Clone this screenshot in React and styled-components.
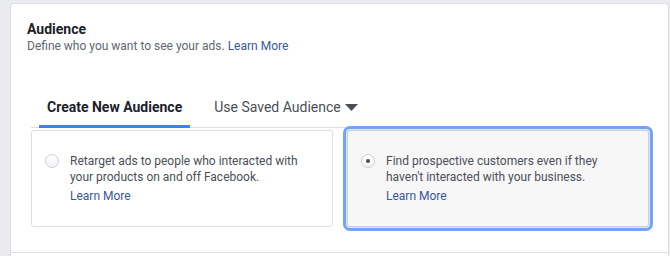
import React, { useState } from "react";
import styled, { createGlobalStyle } from "styled-components";

const GlobalStyle = createGlobalStyle`
  * { box-sizing: border-box; }
  body {
    margin: 0;
    background-color: #e9ebee;
    font-family: Roboto, "Liberation Sans", Arial, sans-serif;
    -webkit-font-smoothing: antialiased;
  }
`;

const Page = styled.div`
  padding: 3px 1px 0 10px;
  height: 256px;
  overflow: hidden;
`;

const Card = styled.div`
  background-color: #fff;
  border: 1px solid #dddfe2;
  border-bottom: none;
  border-radius: 4px 4px 0 0;
  height: 260px;
`;

const Section = styled.div`
  padding: 17px 19px 25px 16px;
  border-bottom: 1px solid #dddfe2;
`;

const Title = styled.h2`
  margin: 0;
  font-size: 14px;
  line-height: 17px;
  font-weight: 700;
  color: #1d2129;
`;

const Subtitle = styled.p`
  margin: 0;
  font-size: 12px;
  line-height: 16px;
  color: #606770;
`;

const Link = styled.a`
  color: #385898;
  text-decoration: none;
  cursor: pointer;
  display: ${(p) => (p.$block ? "block" : "inline")};
  margin-top: ${(p) => (p.$block ? "3px" : "0")};
`;

const Body = styled.div`
  margin: 44px 0 0 4px;
`;

const TabList = styled.div`
  display: flex;
  align-items: flex-end;
  gap: 16px;
  border-bottom: 1px solid #dddfe2;
  padding-left: 8px;
`;

const Tab = styled.button`
  display: flex;
  align-items: center;
  gap: 4px;
  background: none;
  border: none;
  border-bottom: 3px solid ${(p) => (p.$active ? "#4080ff" : "transparent")};
  margin-bottom: -1px;
  padding: 0 8px 9px;
  font-family: inherit;
  font-size: 14px;
  line-height: 18px;
  font-weight: ${(p) => (p.$active ? 700 : 400)};
  color: ${(p) => (p.$active ? "#1d2129" : "#4b4f56")};
  cursor: pointer;
`;

const Options = styled.div`
  display: grid;
  grid-template-columns: 302px 302px;
  gap: 14px;
  margin-top: 2px;
`;

const Option = styled.label`
  display: flex;
  align-items: flex-start;
  gap: 11px;
  padding: 22px 14px 22px 13px;
  border: 1px solid ${(p) => (p.$selected ? "#c8d0dc" : "#dddfe2")};
  border-radius: 3px;
  background-color: ${(p) => (p.$selected ? "#f7f7f8" : "#fff")};
  box-shadow: ${(p) =>
    p.$selected ? "0 0 0 1px #dbe7fb, 0 0 0 4px #72a3f6" : "none"};
  cursor: pointer;
`;

const Radio = styled.span`
  flex: none;
  position: relative;
  width: 14px;
  height: 14px;
  margin-top: 1px;
  border-radius: 50%;
  border: 1px solid #ccd0d5;
  background: linear-gradient(#fff, #f1f2f4);
  &::after {
    content: "";
    display: ${(p) => (p.$checked ? "block" : "none")};
    position: absolute;
    top: 4px;
    left: 4px;
    width: 4px;
    height: 4px;
    border-radius: 50%;
    background-color: #4b4f56;
  }
`;

const OptionText = styled.div`
  font-size: 12px;
  line-height: 16px;
  color: #4b4f56;
`;

const Caret = () => (
  <svg width="13" height="7" viewBox="0 0 13 7">
    <path d="M0 0h13L6.5 7z" fill="#4b4f56" />
  </svg>
);

const options = [
  {
    id: "retarget",
    text: "Retarget ads to people who interacted with your products on and off Facebook.",
  },
  {
    id: "prospect",
    text: "Find prospective customers even if they haven't interacted with your business.",
  },
];

export default function App() {
  const [selected, setSelected] = useState("prospect");

  return (
    <Page>
      <GlobalStyle />
      <Card>
        <Section>
          <Title>Audience</Title>
          <Subtitle>
            Define who you want to see your ads. <Link>Learn More</Link>
          </Subtitle>
          <Body>
            <TabList>
              <Tab $active>Create New Audience</Tab>
              <Tab>
                Use Saved Audience <Caret />
              </Tab>
            </TabList>
            <Options>
              {options.map((o) => (
                <Option
                  key={o.id}
                  $selected={selected === o.id}
                  onClick={() => setSelected(o.id)}
                >
                  <Radio $checked={selected === o.id} />
                  <OptionText>
                    {o.text}
                    <Link $block>Learn More</Link>
                  </OptionText>
                </Option>
              ))}
            </Options>
          </Body>
        </Section>
      </Card>
    </Page>
  );
}
